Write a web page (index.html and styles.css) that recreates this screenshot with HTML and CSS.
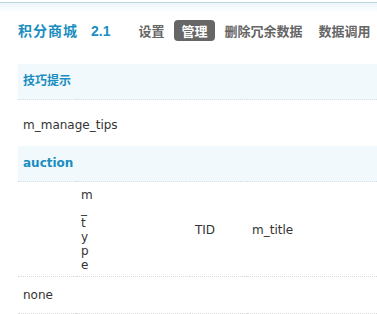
FILE: index.html
```html
<!DOCTYPE html>
<html lang="zh-CN">
<head>
  <meta charset="UTF-8" />
  <title>积分商城 2.1</title>
  <link rel="stylesheet" href="styles.css">
</head>
<body>
  <div class="topline"></div>
  <div class="container">
    <div class="itemtitle">
      <h3>积分商城<span class="ver">2.1</span></h3>
      <ul class="tab1">
        <li><a href="#">设置</a></li>
        <li class="current"><a href="#">管理</a></li>
        <li><a href="#">删除冗余数据</a></li>
        <li><a href="#">数据调用</a></li>
      </ul>
    </div>

    <table class="tb">
      <colgroup>
        <col class="w-blank">
        <col class="w-type">
        <col class="w-tid">
        <col>
      </colgroup>
      <tr class="partition"><th colspan="4">技巧提示</th></tr>
      <tr class="tips"><td colspan="4">m_manage_tips</td></tr>
      <tr class="partition"><th colspan="4">auction</th></tr>
      <tr class="header">
        <td></td>
        <td><span class="narrow">m_type</span></td>
        <td>TID</td>
        <td>m_title</td>
      </tr>
      <tr class="empty"><td colspan="4">none</td></tr>
    </table>
  </div>
</body>
</html>
```

FILE: styles.css
```css
body {
  margin: 0;
  font-family: "DejaVu Sans", Verdana, "Noto Sans CJK SC", sans-serif;
  font-size: 12px;
  color: #333;
  background: #fff;
  overflow: hidden;
}
.topline {
  height: 10px;
  margin-top: 2px;
  border-top: 1px solid #b9d6dc;
  background: linear-gradient(#edf5fa, #fff);
}
.container {
  padding-left: 18px;
}
.itemtitle {
  display: flex;
  align-items: center;
  height: 21px;
  margin-top: 7px;
  white-space: nowrap;
}
.itemtitle h3 {
  margin: 0;
  font-family: "Noto Sans CJK SC", sans-serif;
  font-size: 14px;
  line-height: 21px;
  font-weight: bold;
  color: #1a8ec0;
  letter-spacing: 1px;
}
.itemtitle .ver {
  margin-left: 13px;
  font-family: "Liberation Sans", Arial, sans-serif;
  letter-spacing: 0;
}
.tab1 {
  display: flex;
  list-style: none;
  margin: 0 0 0 22px;
  padding: 0;
}
.tab1 li {
  margin-right: 4px;
}
.tab1 a {
  display: block;
  padding: 0 6px;
  border-radius: 4px;
  font-family: "Noto Sans CJK SC", sans-serif;
  font-weight: bold;
  font-size: 13px;
  line-height: 21px;
  color: #666;
  text-decoration: none;
}
.tab1 .current a {
  background: #666;
  color: #fff;
  padding: 0 7px;
}
.tb {
  width: 100%;
  margin-top: 23px;
  border-collapse: collapse;
  table-layout: fixed;
}
.w-blank { width: 58px; }
.w-type { width: 114px; }
.w-tid { width: 57px; }
.tb th,
.tb td {
  padding: 9px 5px;
  line-height: 17px;
  text-align: left;
  border-bottom: 1px dotted #d9d9d9;
}
.tb th {
  background: #f2f9fd;
  color: #1a8ec0;
  font-weight: bold;
  border-bottom-color: #d4e2ea;
}
.tips td {
  padding: 17px 5px 12px;
  border-bottom: none;
}
.header td {
  padding: 6px 5px 4px;
  line-height: 14px;
  vertical-align: middle;
}
.narrow {
  display: block;
  width: 1px;
  word-break: break-all;
}
.empty td {
  padding: 10px 5px 9px;
}
```
